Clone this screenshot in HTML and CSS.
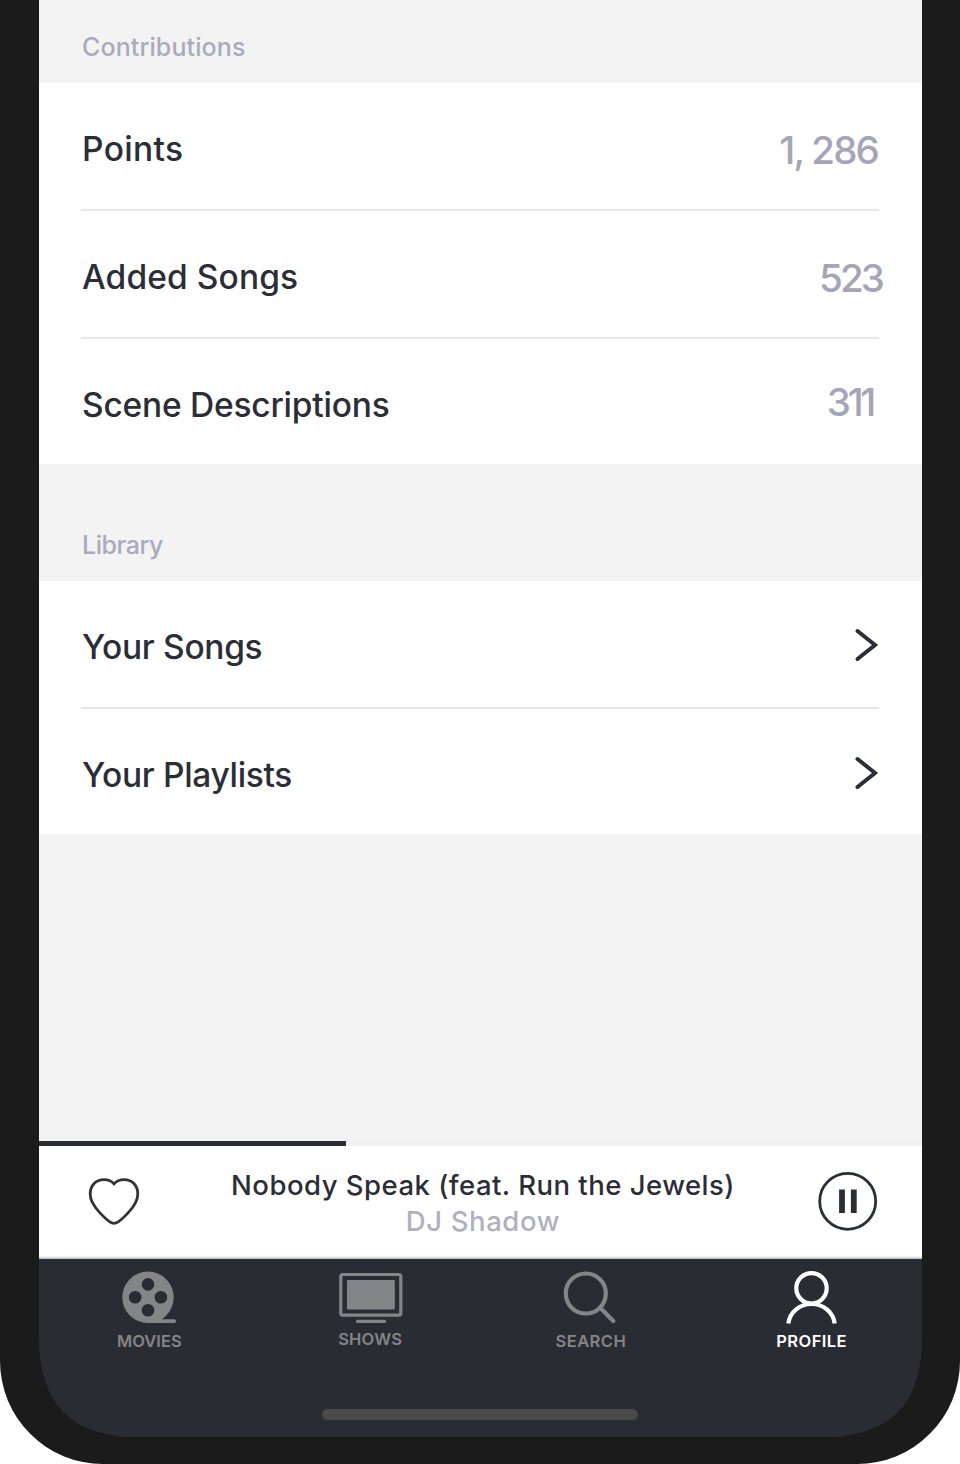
FILE: index.html
```html
<!DOCTYPE html>
<html lang="en">
<head>
<meta charset="utf-8">
<title>Profile</title>
<link rel="stylesheet" href="styles.css">
</head>
<body>
<div class="phone">
  <div class="screen">
    <main class="content">
      <h2 class="heading heading-first"><span class="t-contributions">Contributions</span></h2>
      <section class="group">
        <div class="row"><span class="label t-points">Points</span><span class="value v-points">1, 286</span></div>
        <div class="row"><span class="label t-added">Added Songs</span><span class="value v-added">523</span></div>
        <div class="row row-last"><span class="label t-scene">Scene Descriptions</span><span class="value v-scene">311</span></div>
      </section>
      <h2 class="heading"><span class="t-library">Library</span></h2>
      <section class="group">
        <div class="row"><span class="label t-songs">Your Songs</span><svg class="chevron" viewBox="0 0 24 34"><path d="M2.500 3 20 17 2.500 31"/></svg></div>
        <div class="row row-last"><span class="label t-playlists">Your Playlists</span><svg class="chevron" viewBox="0 0 24 34"><path d="M2.500 3 20 17 2.500 31"/></svg></div>
      </section>
    </main>
    <div class="progress"><div class="progress-fill"></div></div>
    <section class="player">
      <svg class="heart" viewBox="0 0 54 50"><path d="M27 7.800C24.500 4.900 21 3.600 17 3.600 8.500 3.600 3.200 9.800 3.200 18c0 7 3.800 12.400 9.300 18.400 3.500 3.800 7 7.300 10.300 9.500 3 2 5.400 2 8.400 0 3.300-2.200 6.800-5.700 10.300-9.500C47 30.400 50.800 25 50.800 18 50.800 9.800 45.500 3.600 37 3.600c-4 0-7.500 1.300-10 4.200z"/></svg>
      <div class="track">
        <div class="song"><span class="t-song">Nobody Speak (feat. Run the Jewels)</span></div>
        <div class="artist"><span class="t-artist">DJ Shadow</span></div>
      </div>
      <svg class="pause" viewBox="0 0 60 60"><circle cx="29.700" cy="30.300" r="28"/><path d="M24 18.500v23.600M35.800 18.500v23.600"/></svg>
    </section>
    <nav class="tabs">
      <div class="tab">
        <svg class="icon" viewBox="0 0 64 54"><circle class="fill" cx="31" cy="28.300" r="25.700"/><path class="fill" d="M31 54V48L50 45.300Q48 48.500 44.500 50.200H57.200a1.900 1.900 0 0 1 0 3.800z"/><g class="hole"><circle cx="31" cy="15.400" r="6.300"/><circle cx="18.200" cy="28.300" r="6.300"/><circle cx="43.900" cy="28.300" r="6.300"/><circle cx="31" cy="41.200" r="6.300"/></g></svg>
        <span class="t-movies">MOVIES</span>
      </div>
      <div class="tab tab-shows">
        <svg class="icon" viewBox="0 0 64 54"><rect class="line thin" x="2.800" y="5.500" width="60" height="40.700" rx="2"/><rect class="fill" x="9" y="11" width="47.800" height="29.600" rx="1"/><path class="line thin" stroke-linecap="round" d="M19.500 52.400h27"/></svg>
        <span class="t-shows">SHOWS</span>
      </div>
      <div class="tab">
        <svg class="icon" viewBox="0 0 64 54"><circle class="line" cx="26.800" cy="24.500" r="20"/><path class="line" stroke-linecap="round" d="M41.200 38.700 54.300 52"/></svg>
        <span class="t-search">SEARCH</span>
      </div>
      <div class="tab active">
        <svg class="icon" viewBox="0 0 64 54"><circle class="line" cx="31.500" cy="19.300" r="15.200"/><path class="line" d="M8.300 54.500C10 43 19.800 35 31.500 35S53 43 54.700 54.500"/></svg>
        <span class="t-profile">PROFILE</span>
      </div>
    </nav>
    <div class="home"><div class="home-bar"></div></div>
  </div>
</div>
</body>
</html>
```
FILE: styles.css
```css
* { box-sizing: border-box; }
body { margin: 0; background: #fff; font-family: Inter, "Liberation Sans", sans-serif; }
span { white-space: nowrap; }
svg { display: block; flex: none; fill: none; overflow: visible; }
.phone {
  width: 960px;
  height: 1464px;
  padding: 0 38px 27px 39px;
  background: #1b1b1b;
  border-radius: 0 0 103px 103px;
}
.screen {
  display: flex;
  flex-direction: column;
  height: 1437px;
  background: #2a2c34;
  clip-path: path("M0 0H883V1335C883 1404 852 1437 782 1437H101C31 1437 0 1404 0 1335Z");
}
.content { height: 1141px; background: #f3f3f3; }
.heading {
  display: flex;
  align-items: flex-end;
  height: 117px;
  margin: 0;
  padding: 0 43px 19px;
  color: #aaaabc;
  font-size: 25px;
  font-weight: 500;
  line-height: 34px;
}
.heading-first { height: 83px; }
.group { padding: 0 43px 0 42px; background: #fff; }
.row {
  display: flex;
  align-items: center;
  justify-content: space-between;
  height: 128px;
  padding: 5px 0 0 1px;
  border-bottom: 2px solid #e6e6e8;
}
.row-last { height: 125px; padding-top: 6px; border-bottom: 0; }
.label { color: #2b2e36; font-size: 33.500px; font-weight: 500; line-height: 42px; }
.value { padding-top: 2px; color: #a5a5b7; font-size: 38.500px; font-weight: 500; line-height: 46px; }
.v-points { margin-right: 1px; letter-spacing: -1.850px; }
.v-added { margin-right: -3px; letter-spacing: -2.900px; }
.v-scene { margin-right: 6px; padding: 0 0 6px; letter-spacing: -3.300px; }
.t-contributions { letter-spacing: 0.100px; }
.t-library { letter-spacing: -0.450px; }
.t-points { letter-spacing: 0.350px; }
.t-added { letter-spacing: 0.100px; }
.t-scene { letter-spacing: -0.220px; }
.t-songs { letter-spacing: -0.320px; }
.t-playlists { letter-spacing: -0.320px; }
.t-song { letter-spacing: 0.480px; }
.t-artist { letter-spacing: 0.600px; }
.t-shows { letter-spacing: 0.200px; }
.t-search, .t-profile { letter-spacing: 0.450px; }
.chevron { width: 24px; height: 34px; margin-bottom: 4px; stroke: #2b2e36; stroke-width: 4; stroke-linecap: round; }
.progress { height: 5px; background: #f0f0f0; }
.progress-fill { width: 307px; height: 5px; background: #2b2c36; }
.player {
  display: flex;
  align-items: center;
  justify-content: space-between;
  height: 113px;
  padding: 0 44px 3px 48px;
  background: #fff linear-gradient(#fff, #bbb) bottom / 100% 3px no-repeat;
}
.heart { width: 54px; height: 50px; stroke: #333; stroke-width: 2.800; }
.pause { width: 60px; height: 60px; stroke: #2b2e36; stroke-width: 2.800; }
.pause path { stroke-width: 5.800; }
.track { padding: 5px 0 0 7px; text-align: center; line-height: 35.500px; font-size: 27.500px; }
.song { color: #2b2e36; font-weight: 500; }
.artist { color: #b0b0c1; font-weight: 500; }
.tabs {
  display: flex;
  height: 110px;
  padding-top: 10px;
  background: #2a2c34;
  color: #848587;
}
.tab {
  flex: 1;
  display: flex;
  flex-direction: column;
  align-items: center;
  gap: 8px;
  font-size: 16.500px;
  font-weight: 600;
  line-height: 20px;
}
.tab-shows { gap: 6px; }
.active { color: #fff; }
.icon { width: 64px; height: 54px; }
.fill { fill: currentColor; }
.hole { fill: #2a2c34; }
.line { stroke: currentColor; stroke-width: 4.200; }
.thin { stroke-width: 3.200; }
.home { flex: 1; padding: 40px 1px 0 0; background: #2a2c34; }
.home-bar { width: 316px; height: 11px; margin: 0 auto; border-radius: 6px; background: #4b4b4a; }
```
